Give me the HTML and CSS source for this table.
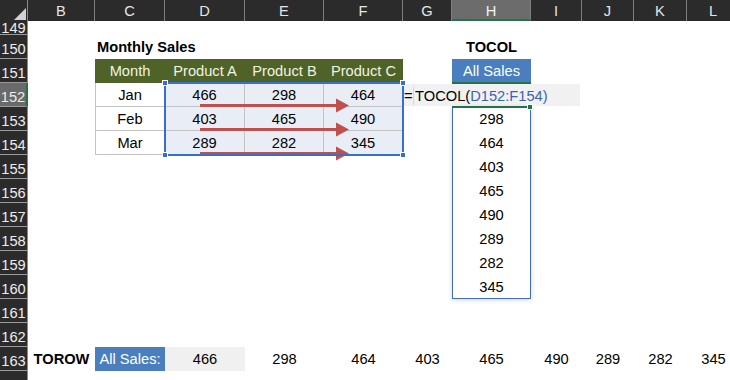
FILE: index.html
```html
<!DOCTYPE html>
<html>
<head>
<meta charset="utf-8">
<title>TOCOL TOROW</title>
<link rel="stylesheet" href="styles.css">
</head>
<body>
<div class="sheet">
  <div class="corner r0 cA"><span class="tri"></span></div>
  <div class="hd r0 cB">B</div>
  <div class="hd r0 cC">C</div>
  <div class="hd r0 cD">D</div>
  <div class="hd r0 cE">E</div>
  <div class="hd r0 cF">F</div>
  <div class="hd r0 cG">G</div>
  <div class="hd hsel r0 cH">H</div>
  <div class="hd r0 cI">I</div>
  <div class="hd r0 cJ">J</div>
  <div class="hd r0 cK">K</div>
  <div class="hd r0 cL">L</div>

  <div class="rh rh149 r149 cA">149</div>
  <div class="rh r150 cA">150</div>
  <div class="rh r151 cA">151</div>
  <div class="rh rsel r152 cA">152</div>
  <div class="rh r153 cA">153</div>
  <div class="rh r154 cA">154</div>
  <div class="rh r155 cA">155</div>
  <div class="rh r156 cA">156</div>
  <div class="rh r157 cA">157</div>
  <div class="rh r158 cA">158</div>
  <div class="rh r159 cA">159</div>
  <div class="rh r160 cA">160</div>
  <div class="rh r161 cA">161</div>
  <div class="rh r162 cA">162</div>
  <div class="rh r163 cA">163</div>
  <div class="rh r164 cA"></div>

  <div class="title r150 cC">Monthly Sales</div>
  <div class="title center r150 cH">TOCOL</div>

  <div class="th r151 cC">Month</div>
  <div class="th r151 cD">Product A</div>
  <div class="th r151 cE">Product B</div>
  <div class="th r151 cF">Product C</div>
  <div class="blue r151 cH">All Sales</div>

  <div class="td first r152 cC">Jan</div>
  <div class="td tint r152 cD">466</div>
  <div class="td tint r152 cE">298</div>
  <div class="td tint r152 cF">464</div>

  <div class="td first r153 cC">Feb</div>
  <div class="td tint r153 cD">403</div>
  <div class="td tint r153 cE">465</div>
  <div class="td tint r153 cF">490</div>

  <div class="td first r154 cC">Mar</div>
  <div class="td tint r154 cD">289</div>
  <div class="td tint r154 cE">282</div>
  <div class="td tint r154 cF">345</div>

  <div class="selbox">
    <span class="handle tl"></span>
    <span class="handle tr"></span>
    <span class="handle bl"></span>
    <span class="handle br"></span>
  </div>

  <div class="active r152 cH"><span class="fillhandle"></span></div>
  <div class="formula r152"><span>=</span><span class="caret"></span><span>TOCOL(</span><span class="ref">D152:F154</span><span class="ref">)</span></div>

  <div class="spill"></div>
  <div class="val r153 cH">298</div>
  <div class="val r154 cH">464</div>
  <div class="val r155 cH">403</div>
  <div class="val r156 cH">465</div>
  <div class="val r157 cH">490</div>
  <div class="val r158 cH">289</div>
  <div class="val r159 cH">282</div>
  <div class="val r160 cH">345</div>

  <div class="arrows">
    <svg width="238" height="72" viewBox="0 0 238 72">
      <rect x="35" y="21" width="137" height="3" fill="#c0504d"/>
      <polygon points="171,15.5 184,22.5 171,29.5" fill="#c0504d"/>
      <rect x="35" y="45" width="137" height="3" fill="#c0504d"/>
      <polygon points="171,39.5 184,46.5 171,53.5" fill="#c0504d"/>
      <rect x="35" y="69" width="137" height="3" fill="#c0504d"/>
      <polygon points="171,63.5 184,70.5 171,77.5" fill="#c0504d"/>
    </svg>
  </div>

  <div class="title center r163 cB">TOROW</div>
  <div class="blue r163 cC">All Sales:</div>
  <div class="val gray r163 cD">466</div>
  <div class="val r163 cE">298</div>
  <div class="val r163 cF">464</div>
  <div class="val r163 cG">403</div>
  <div class="val r163 cH">465</div>
  <div class="val r163 cI">490</div>
  <div class="val r163 cJ">289</div>
  <div class="val r163 cK">282</div>
  <div class="val r163 cL">345</div>
</div>
</body>
</html>
```

FILE: styles.css
```css
* { box-sizing: border-box; margin: 0; padding: 0; }
html, body { width: 730px; height: 380px; overflow: hidden; background: #ffffff; }
body { font-family: "Liberation Sans", Arial, sans-serif; font-size: 14.67px; color: #000; }

.sheet {
  display: grid;
  grid-template-columns: 28px 67px 70px 80px 79px 79px 49px 79px 51px 52px 53px 53px;
  grid-template-rows: 21px 14px repeat(15, 24px);
  width: 740px;
}

.cA { grid-column: 1; } .cB { grid-column: 2; } .cC { grid-column: 3; }
.cD { grid-column: 4; } .cE { grid-column: 5; } .cF { grid-column: 6; }
.cG { grid-column: 7; } .cH { grid-column: 8; } .cI { grid-column: 9; }
.cJ { grid-column: 10; } .cK { grid-column: 11; } .cL { grid-column: 12; }

.r0 { grid-row: 1; } .r149 { grid-row: 2; } .r150 { grid-row: 3; }
.r151 { grid-row: 4; } .r152 { grid-row: 5; } .r153 { grid-row: 6; }
.r154 { grid-row: 7; } .r155 { grid-row: 8; } .r156 { grid-row: 9; }
.r157 { grid-row: 10; } .r158 { grid-row: 11; } .r159 { grid-row: 12; }
.r160 { grid-row: 13; } .r161 { grid-row: 14; } .r162 { grid-row: 15; }
.r163 { grid-row: 16; } .r164 { grid-row: 17; }

/* headers */
.corner {
  background: #2b2b2b;
  display: flex; justify-content: flex-end; align-items: flex-end;
  padding: 0 1px 1px 0;
  border-right: 1px solid #8a8a8a;
}
.tri { width: 0; height: 0; border-left: 12px solid transparent; border-bottom: 12px solid #d2d2d2; }
.hd {
  background: #2b2b2b; color: #e6e6e6; text-align: center;
  padding-top: 2px; line-height: 19px;
  border-right: 1px solid #7e7e7e;
}
.hd.hsel { background: #6c6c6c; border-bottom: 2px solid #227447; color: #f2f2f2; }

.rh {
  background: #2b2b2b; color: #ececec; text-align: center;
  padding-top: 5px; line-height: 18px;
  border-bottom: 1px solid #9a9a9a;
  border-right: 1px solid #8a8a8a;
  overflow: hidden;
}
.rh.rh149 { padding-top: 0; line-height: 14px; }
.rh.rsel { background: #6a6a6a; border-right: 2px solid #227447; }

/* cells */
.title { font-weight: bold; white-space: nowrap; padding-left: 2px; line-height: 24px; }
.title.center { text-align: center; padding-left: 0; }

.th {
  background: #4f6228; color: #f1f3e3; text-align: center; line-height: 24px;
  white-space: nowrap;
}
.blue { background: #4a7ebf; color: #ffffff; text-align: center; line-height: 24px; white-space: nowrap; }

.td {
  text-align: center; padding-top: 1px; line-height: 22px;
  border-right: 1px solid #c3c3c3; border-bottom: 1px solid #c3c3c3;
}
.td.first { border-left: 1px solid #c3c3c3; }
.td.tint { background: #e9eef6; }

.val { text-align: center; padding-top: 1px; line-height: 23px; }
.val.gray { background: #f0f0f0; }

/* selection of D152:F154 */
.selbox {
  grid-column: 4 / 7; grid-row: 5 / 8;
  margin: -1px;
  border: 2px solid #3470cc;
  position: relative;
}
.handle {
  position: absolute; width: 6px; height: 6px;
  background: #3470cc; border: 1px solid #ffffff;
}
.handle.tl { left: -4px; top: -4px; }
.handle.tr { right: -4px; top: -4px; }
.handle.bl { left: -4px; bottom: -4px; }
.handle.br { right: -4px; bottom: -4px; }

/* active cell H152 */
.active {
  margin: -1px 0;
  border-top: 2px solid #227447;
  border-bottom: 2px solid #227447;
  position: relative;
}
.fillhandle {
  position: absolute; right: -2px; bottom: -4px;
  width: 6px; height: 6px; background: #227447; border: 1px solid #ffffff;
}

/* in-cell formula edit */
.formula {
  grid-column: 7 / 10;
  align-self: start;
  width: 177px; height: 22px; margin-top: 1px;
  background: #f1f1f1;
  line-height: 22px; padding-left: 1px; padding-top: 1px;
  white-space: nowrap;
  display: flex; align-items: center;
}
.caret { display: block; width: 1px; height: 18px; background: #d6d6d6; margin: 0 1px 0 0.5px; }
.ref { color: #3b63b5; }

/* spill range */
.spill {
  grid-column: 8; grid-row: 6 / 14;
  border: 1px solid #3a6fc8;
  box-shadow: 0 1px 5px rgba(0, 0, 0, 0.16);
}

/* arrows */
.arrows { grid-column: 4 / 7; grid-row: 5 / 8; pointer-events: none; }
.arrows svg { display: block; overflow: visible; }
```
